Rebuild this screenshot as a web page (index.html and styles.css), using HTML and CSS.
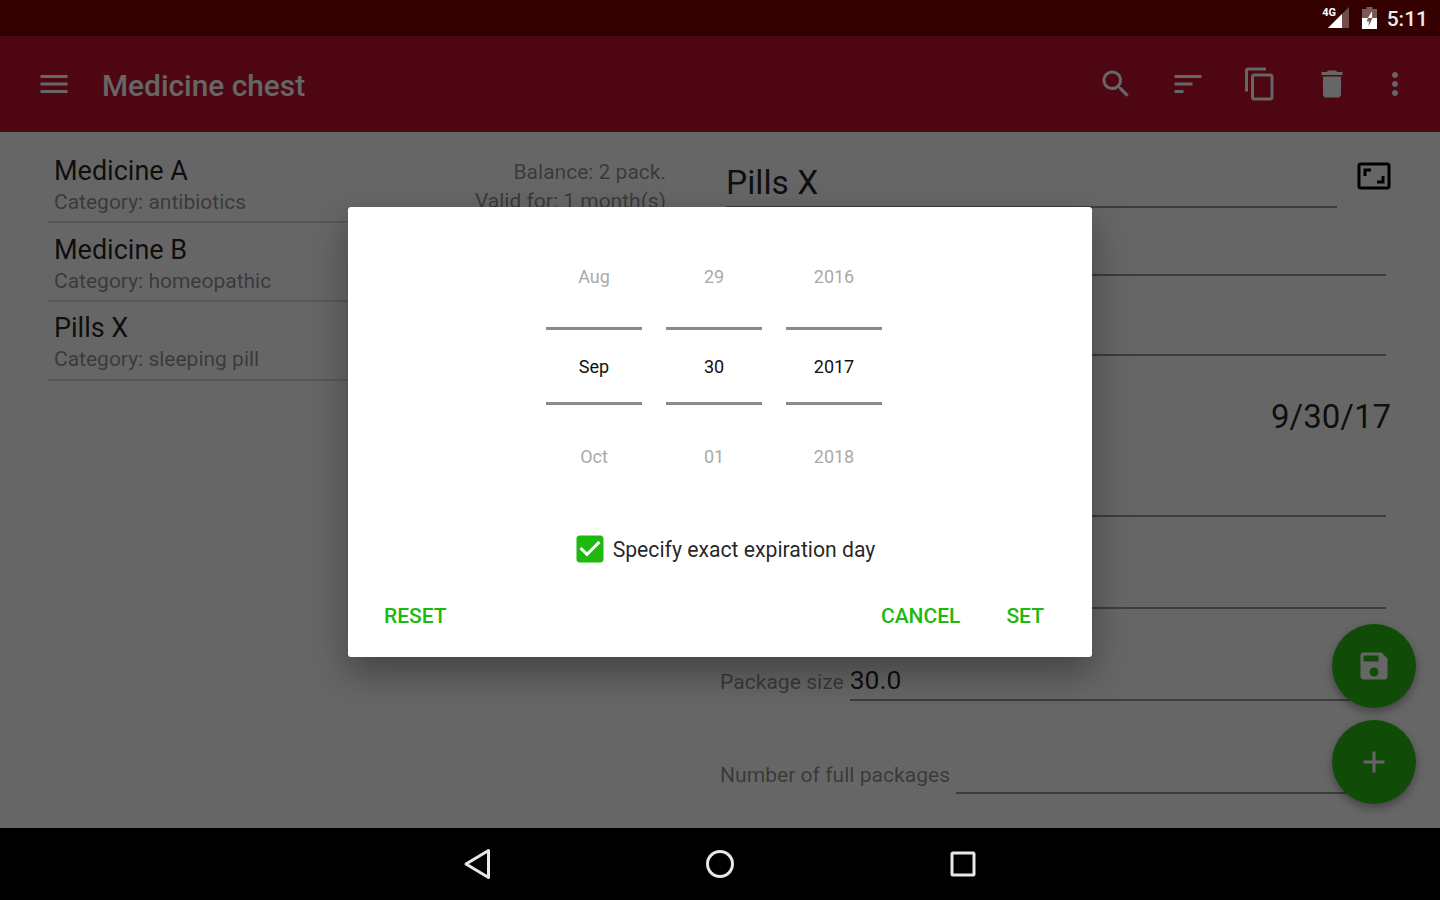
FILE: index.html
```html
<!DOCTYPE html>
<html lang="en">
<head>
    <meta charset="UTF-8">
    <meta name="viewport" content="width=device-width, initial-scale=1.0">
    <title>Medicine chest</title>
    <link rel="stylesheet" href="styles.css">
</head>
<body>
    <div class="status-bar">
        <span class="net-label">4G</span>
        <svg class="signal" width="21" height="21" viewBox="0 0 21 21">
            <path d="M21 0v21H0z" fill="#fff" fill-opacity=".3"/>
            <path d="M14 7v14H0z" fill="#fff"/>
        </svg>
        <svg class="battery" width="15" height="22" viewBox="0 0 15 22">
            <path d="M4.500 0h6v2H15v20H0V2h4.500z" fill="#fff" fill-opacity=".35"/>
            <path d="M10 4L6 11h4z" fill="#fff"/>
            <path fill-rule="evenodd" d="M0 11h15v11H0z M6 11h4.500L6.500 19.500 7 14.500H4.500z" fill="#fff"/>
        </svg>
        <span class="clock">5:11</span>
    </div>

    <div class="main">
        <header class="toolbar">
            <svg class="icon menu-icon" viewBox="0 0 24 24"><path d="M3 18h18v-2H3v2zm0-5h18v-2H3v2zm0-5h18V6H3v2z"/></svg>
            <h1 class="title">Medicine chest</h1>
            <div class="actions">
                <svg class="icon" viewBox="0 0 24 24"><path d="M15.500 14h-.79l-.28-.27C15.410 12.590 16 11.110 16 9.500 16 5.910 13.090 3 9.500 3S3 5.910 3 9.500 5.910 16 9.500 16c1.610 0 3.090-.59 4.230-1.570l.27.28v.79l5 4.990L20.490 19l-4.990-5zm-6 0C7.010 14 5 11.990 5 9.500S7.010 5 9.500 5 14 7.010 14 9.500 11.990 14 9.500 14z"/></svg>
                <svg class="icon" viewBox="0 0 24 24"><path d="M3 18h6v-2H3v2zM3 6v2h18V6H3zm0 7h12v-2H3v2z"/></svg>
                <svg class="icon" viewBox="0 0 24 24"><path d="M16 1H4c-1.100 0-2 .9-2 2v14h2V3h12V1zm3 4H8c-1.100 0-2 .9-2 2v14c0 1.100.9 2 2 2h11c1.100 0 2-.9 2-2V7c0-1.100-.9-2-2-2zm0 16H8V7h11v14z"/></svg>
                <svg class="icon" viewBox="0 0 24 24"><path d="M6 19c0 1.100.9 2 2 2h8c1.100 0 2-.9 2-2V7H6v12zM19 4h-3.500l-1-1h-5l-1 1H5v2h14V4z"/></svg>
                <svg class="icon more-icon" viewBox="0 0 24 24"><path d="M12 8c1.100 0 2-.9 2-2s-.9-2-2-2-2 .9-2 2 .9 2 2 2zm0 2c-1.100 0-2 .9-2 2s.9 2 2 2 2-.9 2-2-.9-2-2-2zm0 6c-1.100 0-2 .9-2 2s.9 2 2 2 2-.9 2-2-.9-2-2-2z"/></svg>
            </div>
        </header>

        <div class="content">
            <div class="med-list">
                <div class="med-row">
                    <div>
                        <div class="med-name">Medicine A</div>
                        <div class="med-cat">Category: antibiotics</div>
                    </div>
                    <div class="med-info">
                        <div>Balance: 2 pack.</div>
                        <div>Valid for: 1 month(s)</div>
                    </div>
                </div>
                <div class="med-row">
                    <div>
                        <div class="med-name">Medicine B</div>
                        <div class="med-cat">Category: homeopathic</div>
                    </div>
                </div>
                <div class="med-row third">
                    <div>
                        <div class="med-name">Pills X</div>
                        <div class="med-cat">Category: sleeping pill</div>
                    </div>
                </div>
            </div>

            <div class="form">
                <div class="title-row">
                    <div class="title-field">Pills X</div>
                    <svg class="icon expand-icon" viewBox="0 0 24 24"><path d="M19 12h-2v3h-3v2h5v-5zM7 9h3V7H5v5h2V9zm14-6H3c-1.100 0-2 .9-2 2v14c0 1.100.9 2 2 2h18c1.100 0 2-.9 2-2V5c0-1.100-.9-2-2-2zm0 16.010H3V4.990h18v14.020z"/></svg>
                </div>
                <div class="field"><div class="field-input"></div></div>
                <div class="field"><div class="field-input"></div></div>
                <div class="date-value">9/30/17</div>
                <div class="field"><div class="field-input"></div></div>
                <div class="field"><div class="field-input"></div></div>
                <div class="field">
                    <span class="field-label">Package size</span>
                    <div class="field-input">30.0</div>
                </div>
                <div class="field">
                    <span class="field-label">Number of full packages</span>
                    <div class="field-input"></div>
                </div>
            </div>

            <div class="fabs">
                <div class="fab">
                    <svg class="icon" viewBox="0 0 24 24"><path d="M17 3H5c-1.110 0-2 .9-2 2v14c0 1.100.89 2 2 2h14c1.100 0 2-.9 2-2V7l-4-4zm-5 16c-1.660 0-3-1.340-3-3s1.340-3 3-3 3 1.340 3 3-1.340 3-3 3zm3-10H5V5h10v4z"/></svg>
                </div>
                <div class="fab">
                    <svg class="icon" viewBox="0 0 24 24"><path d="M19 13h-6v6h-2v-6H5v-2h6V5h2v6h6v2z"/></svg>
                </div>
            </div>
        </div>

        <div class="scrim">
            <div class="dialog">
                <div class="picker">
                    <div class="wheel">
                        <div class="cell">Aug</div>
                        <div class="cell current">Sep</div>
                        <div class="cell">Oct</div>
                    </div>
                    <div class="wheel">
                        <div class="cell">29</div>
                        <div class="cell current">30</div>
                        <div class="cell">01</div>
                    </div>
                    <div class="wheel">
                        <div class="cell">2016</div>
                        <div class="cell current">2017</div>
                        <div class="cell">2018</div>
                    </div>
                </div>
                <div class="check-row">
                    <svg class="check-icon" viewBox="0 0 24 24"><path d="M19 3H5c-1.110 0-2 .9-2 2v14c0 1.100.89 2 2 2h14c1.100 0 2-.9 2-2V5c0-1.100-.9-2-2-2zm-9 14l-5-5 1.410-1.410L10 14.170l7.590-7.590L19 8l-9 9z"/></svg>
                    <span>Specify exact expiration day</span>
                </div>
                <div class="dialog-buttons">
                    <span class="text-button reset">RESET</span>
                    <span class="text-button">CANCEL</span>
                    <span class="text-button">SET</span>
                </div>
            </div>
        </div>
    </div>

    <nav class="nav-bar">
        <svg class="nav-icon" viewBox="0 0 36 36"><path d="M29.500 4.500v27L7 18z"/></svg>
        <svg class="nav-icon" viewBox="0 0 36 36"><circle cx="18" cy="18" r="12.500"/></svg>
        <svg class="nav-icon" viewBox="0 0 36 36"><rect x="7" y="7" width="22" height="22" rx="1"/></svg>
    </nav>
</body>
</html>
```

FILE: styles.css
```css
* { box-sizing: border-box; }
body { margin: 0; width: 1440px; height: 900px; overflow: hidden; display: flex; flex-direction: column; font-family: Roboto, "Noto Sans", sans-serif; background: #fff; }

.status-bar { height: 36px; background: #340000; color: #ececec; display: flex; align-items: center; justify-content: flex-end; padding-right: 12px; position: relative; }
.net-label { position: absolute; right: 104px; top: 6px; font-size: 11px; font-weight: 700; line-height: 14px; color: #fff; }
.signal { margin-right: 13px; margin-bottom: 1px; }
.battery { margin-right: 10px; }
.clock { font-size: 21px; font-weight: 500; line-height: 36px; margin-top: 2px; }

.main { flex: 1; min-height: 0; display: flex; flex-direction: column; position: relative; }
.icon { width: 36px; height: 36px; fill: #fff; flex: none; display: block; }

.toolbar { height: 96px; flex: none; background: #c3112f; display: flex; align-items: center; padding-left: 36px; padding-right: 27px; box-shadow: 0 2px 6px rgba(0, 0, 0, 0.4); position: relative; }
.title { margin: 2px 0 0 30px; font-size: 29.850px; font-weight: 500; color: #fff; flex: 1; }
.actions { display: flex; gap: 36px; margin-top: -1px; }
.more-icon { margin-left: -9px; }

.content { flex: 1; min-height: 0; display: flex; background: #fff; position: relative; }

.med-list { width: 696px; flex: none; padding: 12px 30px 0 48px; }
.med-row { height: 79px; border-bottom: 2px solid #dcdcdc; padding: 11px 0 0 6px; display: flex; justify-content: space-between; }
.med-row.third { padding-top: 10px; }
.med-name { font-size: 27px; line-height: 32px; color: rgba(0, 0, 0, 0.87); }
.med-cat { font-size: 21px; line-height: 28px; margin-top: 1px; color: rgba(0, 0, 0, 0.45); }
.med-info { font-size: 21px; line-height: 29px; margin-top: 3px; text-align: right; color: rgba(0, 0, 0, 0.45); }

.form { margin-left: 24px; width: 666px; padding-top: 1px; display: grid; grid-template-rows: 75px 68px 80px 122px 39px 92px 92px 93px; }
.title-row { display: flex; align-items: flex-end; margin-left: 6px; margin-right: -5px; }
.title-field { flex: 1; height: 54px; padding-top: 11px; font-size: 33.500px; line-height: 36px; border-bottom: 2px solid #969696; color: rgba(0, 0, 0, 0.87); }
.expand-icon { fill: #000; margin-left: 19px; margin-right: -1px; align-self: flex-start; margin-top: 25px; }
.date-value { font-size: 33px; text-align: right; margin-right: -5px; line-height: 122px; color: rgba(0, 0, 0, 0.87); }
.field { display: flex; align-items: flex-end; gap: 6px; }
.field-label { font-size: 21.100px; line-height: 30px; margin-bottom: 4px; color: rgba(0, 0, 0, 0.45); white-space: nowrap; }
.field-input { flex: 1; height: 40px; padding-top: 1px; border-bottom: 2px solid #969696; font-size: 26.500px; line-height: 36px; color: rgba(0, 0, 0, 0.87); }

.fabs { position: absolute; right: 24px; bottom: 24px; display: flex; flex-direction: column; gap: 12px; }
.fab { width: 84px; height: 84px; border-radius: 50%; background: #28be16; display: flex; align-items: center; justify-content: center; box-shadow: 0 4px 10px rgba(0, 0, 0, 0.35); }

.scrim { position: absolute; inset: 0; background: rgba(0, 0, 0, 0.6); display: flex; align-items: center; justify-content: center; }
.dialog { width: 744px; height: 450px; background: #fff; border-radius: 3px; padding-top: 18px; display: flex; flex-direction: column; box-shadow: 0 16px 36px rgba(0, 0, 0, 0.35); }

.picker { display: flex; justify-content: center; gap: 24px; padding-right: 12px; }
.wheel { width: 96px; display: flex; flex-direction: column; }
.cell { height: 102px; display: flex; align-items: center; justify-content: center; font-size: 18px; color: #aaa; }
.cell.current { height: 78px; color: #111; border-top: 3px solid #8a8a8a; border-bottom: 3px solid #8a8a8a; }

.check-row { margin-top: 24px; height: 36px; display: flex; align-items: center; justify-content: center; gap: 5px; padding-left: 7px; font-size: 21.200px; color: rgba(0, 0, 0, 0.87); }
.check-icon { width: 36px; height: 36px; fill: #1eb80e; flex: none; }

.dialog-buttons { margin-top: 34px; height: 30px; display: flex; align-items: center; justify-content: flex-end; gap: 46px; padding: 0 48px 0 36px; }
.text-button { font-size: 21px; font-weight: 500; color: #1eb80e; }
.text-button.reset { margin-right: auto; }

.nav-bar { height: 72px; flex: none; background: #000; display: flex; align-items: center; justify-content: center; gap: 207px; }
.nav-icon { width: 36px; height: 36px; fill: none; stroke: #e8e8e8; stroke-width: 3; stroke-linejoin: round; }
```
